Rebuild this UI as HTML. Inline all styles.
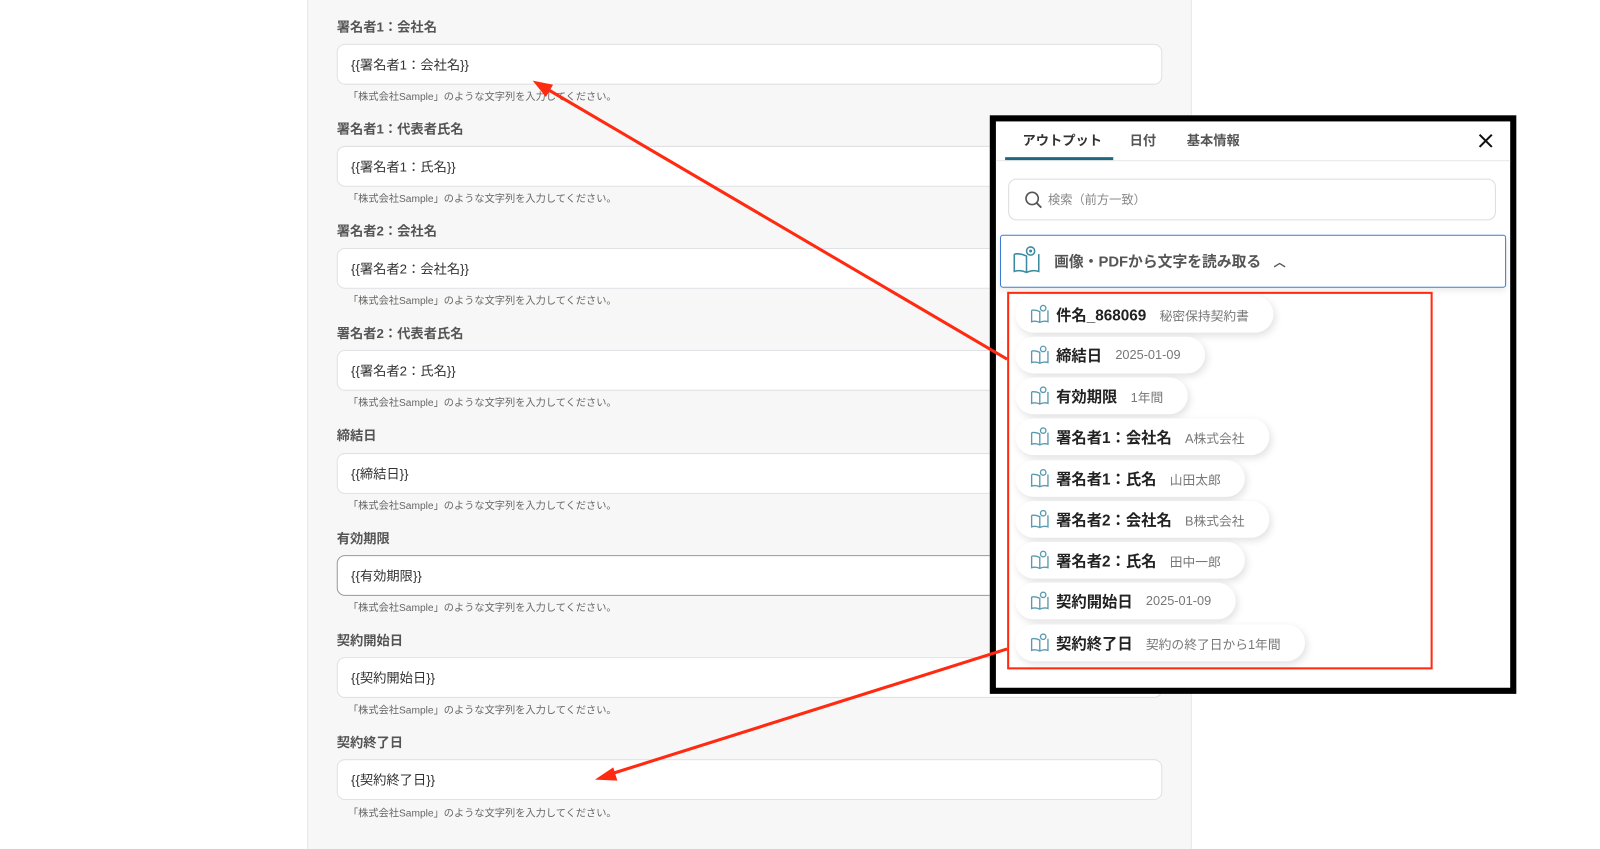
<!DOCTYPE html>
<html><head><meta charset="utf-8"><style>
*{box-sizing:border-box;margin:0;padding:0}
body{width:1600px;height:832px;background:#fff;position:relative;overflow:hidden;font-family:"Liberation Sans","Noto Sans CJK JP",sans-serif}
#w{position:absolute;left:0;top:0;width:1568px;height:816px;transform:scale(1.0204);transform-origin:0 0}
.panel{position:absolute;left:301px;top:0;width:867px;height:832px;background:#f7f7f7;border-left:1px solid #e6e6e6;border-right:1px solid #e6e6e6}
.lbl{position:absolute;left:330px;font-size:13px;font-weight:bold;color:#555;margin-top:-2px}
.inp{position:absolute;left:330px;width:809px;height:40px;background:#fff;border:1px solid #dfe1e5;border-radius:8px;font-size:13px;color:#333;padding:9px 0 0 13px}
.hint{position:absolute;left:341px;font-size:10px;color:#666;margin-top:-1px}
.box{position:absolute;left:970px;top:113px;width:516px;height:567px;border:6px solid #000;background:#fff}
.tab{position:absolute;top:8px;font-size:13px;font-weight:bold;color:#555}
.chip{position:absolute;left:19px;height:36px;background:#fff;border-radius:18px;box-shadow:2px 3px 8px rgba(0,0,0,.12);display:flex;align-items:center;padding:0 24px 0 14px;white-space:nowrap}
.chip b{font-size:15px;color:#222;margin-left:6px}
.chip span{font-size:12.5px;color:#777;margin-left:13px}
</style></head><body><div id="w">
<div class="panel"></div>
<div class="lbl" style="top:18px">署名者1：会社名</div><div class="inp" style="top:43px">{{署名者1：会社名}}</div><div class="hint" style="top:87px">「株式会社Sample」のような文字列を入力してください。</div>
<div class="lbl" style="top:118px">署名者1：代表者氏名</div><div class="inp" style="top:143px">{{署名者1：氏名}}</div><div class="hint" style="top:187px">「株式会社Sample」のような文字列を入力してください。</div>
<div class="lbl" style="top:218px">署名者2：会社名</div><div class="inp" style="top:243px">{{署名者2：会社名}}</div><div class="hint" style="top:287px">「株式会社Sample」のような文字列を入力してください。</div>
<div class="lbl" style="top:318px">署名者2：代表者氏名</div><div class="inp" style="top:343px">{{署名者2：氏名}}</div><div class="hint" style="top:387px">「株式会社Sample」のような文字列を入力してください。</div>
<div class="lbl" style="top:418px">締結日</div><div class="inp" style="top:444px">{{締結日}}</div><div class="hint" style="top:488px">「株式会社Sample」のような文字列を入力してください。</div>
<div class="lbl" style="top:519px">有効期限</div><div class="inp" style="top:544px;border-color:#999">{{有効期限}}</div><div class="hint" style="top:588px">「株式会社Sample」のような文字列を入力してください。</div>
<div class="lbl" style="top:619px">契約開始日</div><div class="inp" style="top:644px">{{契約開始日}}</div><div class="hint" style="top:688px">「株式会社Sample」のような文字列を入力してください。</div>
<div class="lbl" style="top:719px">契約終了日</div><div class="inp" style="top:744px">{{契約終了日}}</div><div class="hint" style="top:789px">「株式会社Sample」のような文字列を入力してください。</div>

<div class="box">
 <div class="tab" style="left:26px;color:#333">アウトプット</div>
 <div style="position:absolute;left:9px;top:35px;width:106px;height:3px;background:#1d6a80"></div>
 <div class="tab" style="left:131px">日付</div>
 <div class="tab" style="left:187px">基本情報</div>
 <div style="position:absolute;left:0;right:0;top:38px;height:1px;background:#e6e6e6"></div>
 <svg style="position:absolute;left:472px;top:11px" width="16" height="16"><path d="M2 2L14 14M14 2L2 14" stroke="#111" stroke-width="2"/></svg>
 <div style="position:absolute;left:12px;top:56px;width:478px;height:41px;border:1px solid #ddd;border-radius:8px;font-size:12px;color:#888;padding:11px 0 0 38px">検索（前方一致）
  <svg style="position:absolute;left:15px;top:11px" width="18" height="18"><circle cx="7.5" cy="7.5" r="6" fill="none" stroke="#555" stroke-width="1.6"/><path d="M12 12L16.5 16.5" stroke="#555" stroke-width="1.8"/></svg></div>
 <div style="position:absolute;left:4px;top:111px;width:496px;height:52px;border:1.5px solid #3b7bd4;border-radius:3px;box-shadow:0 3px 6px rgba(0,0,0,.08)">
  <svg style="position:absolute;left:10px;top:9px" width="30" height="30" viewBox="0 0 30 30"><path d="M3 9v17q6-2 12 1q6-3 12-1V9M3 9q6-1 12 2v16M3 9" fill="none" stroke="#3a8aa0" stroke-width="1.5"/><circle cx="19" cy="6" r="4" fill="none" stroke="#3a8aa0" stroke-width="1.5"/><circle cx="19" cy="6" r="1.5" fill="#3a8aa0"/></svg>
  <div style="position:absolute;left:52px;top:14px;font-size:14.5px;font-weight:bold;color:#555">画像・PDFから文字を読み取る &nbsp;&nbsp;<span style="font-size:12px">︿</span></div>
 </div>
 <div style="position:absolute;left:11px;top:167px;width:417px;height:370px;border:2.5px solid #ff2a10"></div>
 <div class="chip" style="top:171px"><svg width="20" height="20" viewBox="0 0 30 30"><path d="M3 9v17q6-2 12 1q6-3 12-1V9M3 9q6-1 12 2v16" fill="none" stroke="#5a9ab0" stroke-width="2"/><circle cx="20" cy="6" r="4" fill="none" stroke="#5a9ab0" stroke-width="2"/></svg><b>件名_868069</b><span>秘密保持契約書</span></div>
 <div class="chip" style="top:211px"><svg width="20" height="20" viewBox="0 0 30 30"><path d="M3 9v17q6-2 12 1q6-3 12-1V9M3 9q6-1 12 2v16" fill="none" stroke="#5a9ab0" stroke-width="2"/><circle cx="20" cy="6" r="4" fill="none" stroke="#5a9ab0" stroke-width="2"/></svg><b>締結日</b><span>2025-01-09</span></div>
 <div class="chip" style="top:251px"><svg width="20" height="20" viewBox="0 0 30 30"><path d="M3 9v17q6-2 12 1q6-3 12-1V9M3 9q6-1 12 2v16" fill="none" stroke="#5a9ab0" stroke-width="2"/><circle cx="20" cy="6" r="4" fill="none" stroke="#5a9ab0" stroke-width="2"/></svg><b>有効期限</b><span>1年間</span></div>
 <div class="chip" style="top:291px"><svg width="20" height="20" viewBox="0 0 30 30"><path d="M3 9v17q6-2 12 1q6-3 12-1V9M3 9q6-1 12 2v16" fill="none" stroke="#5a9ab0" stroke-width="2"/><circle cx="20" cy="6" r="4" fill="none" stroke="#5a9ab0" stroke-width="2"/></svg><b>署名者1：会社名</b><span>A株式会社</span></div>
 <div class="chip" style="top:332px"><svg width="20" height="20" viewBox="0 0 30 30"><path d="M3 9v17q6-2 12 1q6-3 12-1V9M3 9q6-1 12 2v16" fill="none" stroke="#5a9ab0" stroke-width="2"/><circle cx="20" cy="6" r="4" fill="none" stroke="#5a9ab0" stroke-width="2"/></svg><b>署名者1：氏名</b><span>山田太郎</span></div>
 <div class="chip" style="top:372px"><svg width="20" height="20" viewBox="0 0 30 30"><path d="M3 9v17q6-2 12 1q6-3 12-1V9M3 9q6-1 12 2v16" fill="none" stroke="#5a9ab0" stroke-width="2"/><circle cx="20" cy="6" r="4" fill="none" stroke="#5a9ab0" stroke-width="2"/></svg><b>署名者2：会社名</b><span>B株式会社</span></div>
 <div class="chip" style="top:412px"><svg width="20" height="20" viewBox="0 0 30 30"><path d="M3 9v17q6-2 12 1q6-3 12-1V9M3 9q6-1 12 2v16" fill="none" stroke="#5a9ab0" stroke-width="2"/><circle cx="20" cy="6" r="4" fill="none" stroke="#5a9ab0" stroke-width="2"/></svg><b>署名者2：氏名</b><span>田中一郎</span></div>
 <div class="chip" style="top:452px"><svg width="20" height="20" viewBox="0 0 30 30"><path d="M3 9v17q6-2 12 1q6-3 12-1V9M3 9q6-1 12 2v16" fill="none" stroke="#5a9ab0" stroke-width="2"/><circle cx="20" cy="6" r="4" fill="none" stroke="#5a9ab0" stroke-width="2"/></svg><b>契約開始日</b><span>2025-01-09</span></div>
 <div class="chip" style="top:493px"><svg width="20" height="20" viewBox="0 0 30 30"><path d="M3 9v17q6-2 12 1q6-3 12-1V9M3 9q6-1 12 2v16" fill="none" stroke="#5a9ab0" stroke-width="2"/><circle cx="20" cy="6" r="4" fill="none" stroke="#5a9ab0" stroke-width="2"/></svg><b>契約終了日</b><span>契約の終了日から1年間</span></div>
</div>

<svg style="position:absolute;left:0;top:0" width="1568" height="816">
 <line x1="987" y1="352" x2="534" y2="86" stroke="#ff2a10" stroke-width="3"/>
 <path d="M522 79L542 83L535 95z" fill="#ff2a10"/>
 <line x1="987" y1="636" x2="597" y2="759" stroke="#ff2a10" stroke-width="3"/>
 <path d="M583 764L601 752L605 765z" fill="#ff2a10"/>
</svg>
</div></body></html>
